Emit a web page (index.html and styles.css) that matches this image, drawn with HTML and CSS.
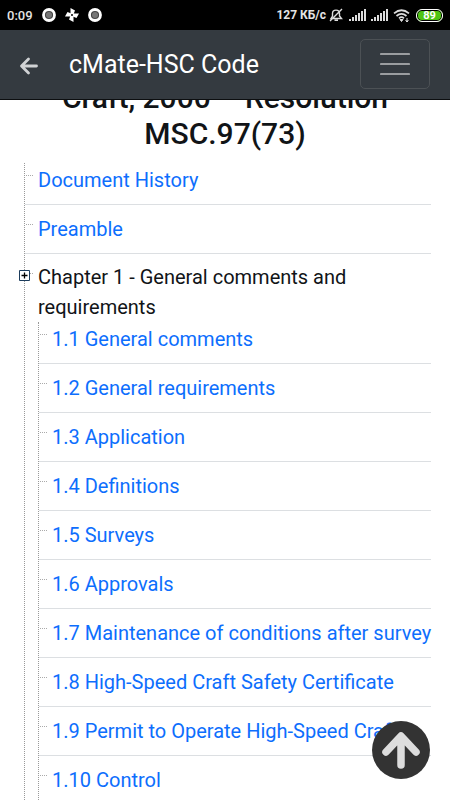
FILE: index.html
```html
<!DOCTYPE html>
<html lang="en">
<head>
<meta charset="utf-8">
<meta name="viewport" content="width=device-width, initial-scale=1">
<title>cMate-HSC Code</title>
<link rel="stylesheet" href="styles.css">
</head>
<body>
<div class="status">
  <span class="clock">0:09</span>
  <svg class="dot" viewBox="0 0 14 14" width="14" height="14"><circle cx="7" cy="7" r="5.500" fill="#444" stroke="#fff" stroke-width="2.800"/><circle cx="7" cy="7" r="3" fill="#777"/></svg>
  <svg class="dot" viewBox="0 0 14 14" width="14" height="14" fill="#fff"><path id="fan" d="M5.500 0 10 2.500 8 7.500H5.500Z"/><use href="#fan" transform="rotate(90 7 7)"/><use href="#fan" transform="rotate(180 7 7)"/><use href="#fan" transform="rotate(270 7 7)"/><circle cx="7" cy="7" r="1" fill="#000"/></svg>
  <svg class="dot" viewBox="0 0 14 14" width="14" height="14"><circle cx="7" cy="7" r="5.500" fill="#444" stroke="#fff" stroke-width="2.800"/><circle cx="7" cy="7" r="3" fill="#777"/></svg>
  <span class="speed">127 КБ/с</span>
  <svg class="mute" viewBox="0 0 14 14" width="14" height="14" fill="none" stroke="#ddd" stroke-width="1.4"><path d="M2 10.5 3.5 8V5.5C3.500 1 10.500 1 10.500 5.500V8L12.500 10.500ZM5.500 12.300H9M1 13 13 1"/></svg>
  <svg class="signal" viewBox="0 0 17 12" width="17" height="12" fill="#ddd"><path d="M0 10h2v2H0ZM3 8h2v4H3ZM6 6h2v6H6ZM9 4h2v8H9ZM12 2h2v10h-2ZM15 0h2v12h-2Z"/></svg>
  <svg class="signal" viewBox="0 0 17 12" width="17" height="12" fill="#ddd"><path d="M0 10h2v2H0ZM3 8h2v4H3ZM6 6h2v6H6ZM9 4h2v8H9ZM12 2h2v10h-2ZM15 0h2v12h-2Z"/></svg>
  <svg class="wifi" viewBox="0 0 17 13" width="17" height="13" fill="none" stroke="#ddd" stroke-width="1.7"><path d="M1 4.300Q8.500-1.800 16 4.300M3.500 7Q8.500 2.600 13.500 7M6 9.400Q8.500 7 11 9.400"/><path d="M7 10.500h3l-1.500 2ZM14 9v4M12.500 11.500 14 13l1.500-1.500" stroke-width="1" fill="#ddd"/></svg>
  <span class="battery">89</span>
</div>
<header class="bar">
  <button class="back" type="button" aria-label="Back"><svg viewBox="0 0 20 18" width="20" height="18" fill="none" stroke="#d0d2d4" stroke-width="2.800" stroke-linecap="round" stroke-linejoin="round"><path d="M9.500 2 2.500 9l7 7M3 9h14.500"/></svg></button>
  <span class="title">cMate-HSC Code</span>
  <button class="menu" type="button" aria-label="Menu"><svg viewBox="0 0 30 24" width="30" height="24" stroke="#9a9da0" stroke-width="2.200" stroke-linecap="round"><path d="M1 2h28M1 12h28M1 22h28"/></svg></button>
</header>
<main class="page">
  <h1>Craft, 2000 – Resolution MSC.97(73)</h1>
  <ul class="tree">
    <li><a href="#history">Document History</a></li>
    <li><a href="#preamble">Preamble</a></li>
    <li class="chapter">
      <button class="toggle" type="button"><svg class="plus" viewBox="0 0 11 11" width="11" height="11"><path d="M.5.5h10v10H.5Z" fill="#fff" stroke="#1c3c5c"/><path d="M2.500 5.500h6M5.500 2.500v6" stroke="#000" stroke-width="1.300"/></svg>Chapter 1 - General comments and requirements</button>
      <ul class="tree">
        <li><a href="#s1">1.1 General comments</a></li>
        <li><a href="#s2">1.2 General requirements</a></li>
        <li><a href="#s3">1.3 Application</a></li>
        <li><a href="#s4">1.4 Definitions</a></li>
        <li><a href="#s5">1.5 Surveys</a></li>
        <li><a href="#s6">1.6 Approvals</a></li>
        <li><a href="#s7">1.7 Maintenance of conditions after survey</a></li>
        <li><a href="#s8">1.8 High-Speed Craft Safety Certificate</a></li>
        <li><a href="#s9">1.9 Permit to Operate High-Speed Craft</a></li>
        <li><a href="#s10">1.10 Control</a></li>
      </ul>
    </li>
  </ul>
</main>
<button class="top" type="button" aria-label="Back to top"><svg viewBox="0 0 58 58" width="58" height="58"><circle cx="29" cy="29" r="29" fill="#333"/><path d="M29 44V16M14 31 29 15l15 16" fill="none" stroke="#ddd" stroke-width="7.500" stroke-linecap="round" stroke-linejoin="round"/></svg></button>
</body>
</html>
```
FILE: styles.css
```css
* { box-sizing: border-box; }

body {
  margin: 0;
  height: 100vh;
  overflow: hidden;
  display: flex;
  flex-direction: column;
  background: #fff;
  color: #111417;
  font-family: Roboto, "Liberation Sans", sans-serif;
}

button {
  border: 0;
  padding: 0;
  background: none;
  color: inherit;
  font: inherit;
}

svg { display: block; flex: none; }

.status {
  flex: none;
  height: 30px;
  padding: 0 7px;
  display: flex;
  align-items: center;
  background: #000;
  color: #e4e4e4;
  font-size: 13px;
  font-weight: 500;
}

.clock { margin-right: 9px; }
.dot { margin-right: 9px; }
.speed { margin-left: auto; font-size: 12px; font-weight: 700; }
.mute { margin: 0 6px 0 3px; }
.signal { margin-right: 5px; }
.wifi { margin-right: 6px; }

.battery {
  width: 27px;
  height: 13px;
  border: 1px solid #fff;
  border-radius: 6px;
  background: #4fc414;
  box-shadow: inset 0 0 0 1px #000;
  color: #fff;
  font-size: 11px;
  font-weight: 700;
  line-height: 11px;
  text-align: center;
}

.bar {
  flex: none;
  z-index: 1;
  height: 70px;
  padding: 0 20px 1px;
  display: flex;
  align-items: center;
  background: #343a40;
  border-bottom: 1px solid #0c0e10;
}

.back { margin: 4px 30px 0 -1px; }
.title { flex: 1; color: #fff; font-size: 25px; }

.menu {
  width: 70px;
  height: 50px;
  display: grid;
  place-items: center;
  border: 1px solid #4c5155;
  border-radius: 5px;
}

.page {
  flex: 1;
  min-height: 0;
  overflow: hidden;
  padding: 0 19px 0 24px;
  font-size: 20px;
  line-height: 30px;
}

h1 {
  margin: -20px 0 11px;
  padding: 0 30px 0 25px;
  font-size: 30px;
  font-weight: 500;
  line-height: 36px;
  text-align: center;
}

.tree {
  margin: 0;
  padding: 0;
  list-style: none;
  border-left: 1px dotted #999;
}

.tree li { position: relative; }

.tree li::before {
  content: "";
  position: absolute;
  left: 1px;
  top: 12px;
  width: 7px;
  border-top: 1px dotted #aaa;
}

.tree li:not(.chapter) { padding: 2px 0 7px; }

.tree a {
  display: block;
  padding: 0 0 9px 13px;
  border-bottom: 1px solid #dcdfe2;
  color: #0d6efd;
  text-decoration: none;
  white-space: nowrap;
}

.tree .chapter { padding: 1px 0 0 13px; }
.toggle { display: block; text-align: left; }

.plus {
  position: absolute;
  left: -6px;
  top: 9px;
}

.top {
  position: fixed;
  right: 20px;
  bottom: 21px;
  z-index: 2;
}
```
